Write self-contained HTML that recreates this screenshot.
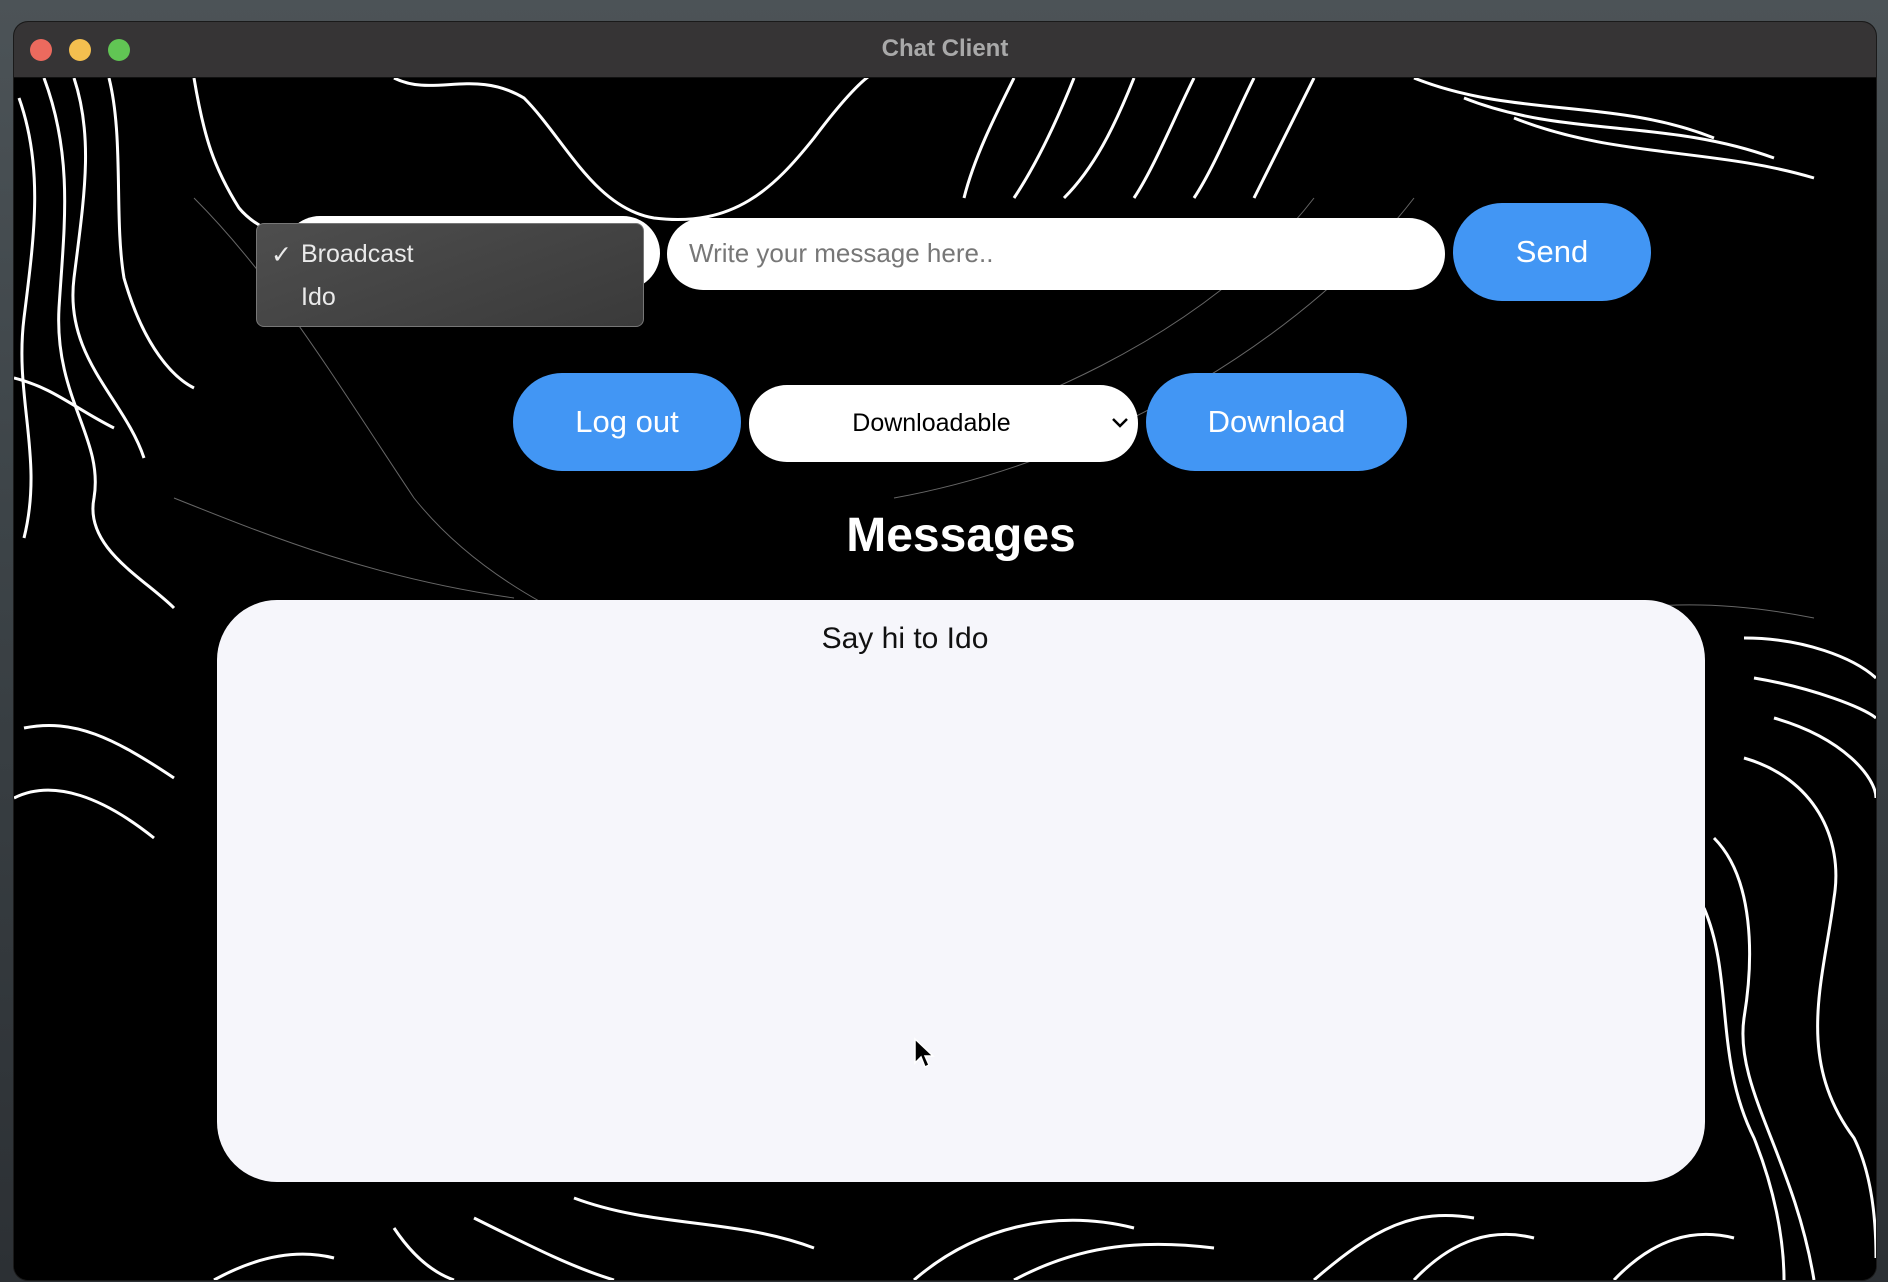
<!DOCTYPE html>
<html><head><meta charset="utf-8"><style>
html,body{margin:0;padding:0}
body{width:1888px;height:1282px;overflow:hidden;position:relative;background:linear-gradient(180deg,#4c5357 0%,#3d4448 40%,#2c3034 100%);font-family:"Liberation Sans",Arial,sans-serif}
.win{position:absolute;left:14px;top:22px;width:1862px;height:1258px;border-radius:14px;overflow:hidden;background:#000;box-shadow:0 0 0 1px #1a1a1a}
.tb{position:absolute;left:0;top:0;right:0;height:55px;background:#363435;border-bottom:1px solid #111}
.tb .t{position:absolute;left:0;right:0;top:13px;text-align:center;color:#a9a9a9;font-weight:bold;font-size:24px}
.dot{position:absolute;top:17px;width:22px;height:22px;border-radius:50%}
.c{position:absolute;left:0;top:56px;right:0;bottom:0;background:#000}
.abs{position:absolute}
.btn{position:absolute;background:#4296f4;color:#fff;border-radius:60px;text-align:center;font-size:31px}
</style></head><body>
<div class="win">
<div class="tb"><div class="dot" style="left:16px;background:#ec6a5e"></div><div class="dot" style="left:55px;background:#f4bf4f"></div><div class="dot" style="left:94px;background:#61c554"></div><div class="t">Chat Client</div></div>
<div class="c">
<svg class="abs" style="left:0;top:0" width="1862" height="1202" viewBox="0 0 1862 1202">
<g fill="none" stroke="#fff" stroke-width="3">
<path d="M5 20 C30 90 20 160 10 240 C0 320 30 380 10 460"/>
<path d="M30 0 C60 80 50 150 45 230 C40 320 90 360 80 420 C70 470 130 500 160 530"/>
<path d="M60 0 C80 60 70 120 60 200 C50 280 110 320 130 380"/>
<path d="M95 0 C110 60 100 140 110 200 C130 270 160 300 180 310"/>
<path d="M180 0 C190 60 200 90 225 130 C250 160 290 160 300 170"/>
<path d="M0 300 C40 310 60 330 100 350"/>
<path d="M10 650 C60 640 100 660 160 700"/>
<path d="M0 720 C40 700 90 720 140 760"/>
<path d="M380 0 C420 20 460 -10 510 20 C550 60 580 130 640 140 C720 150 760 110 800 60 C830 20 850 0 860 -5"/>
<path d="M1000 0 C980 40 960 80 950 120"/>
<path d="M1060 0 C1040 50 1020 90 1000 120"/>
<path d="M1120 0 C1100 50 1080 90 1050 120"/>
<path d="M1180 0 C1160 40 1140 90 1120 120"/>
<path d="M1240 0 C1220 40 1200 90 1180 120"/>
<path d="M1300 0 C1280 40 1260 80 1240 120"/>
<path d="M1400 0 C1500 40 1600 20 1700 60"/>
<path d="M1450 20 C1550 60 1650 40 1760 80"/>
<path d="M1500 40 C1600 80 1700 70 1800 100"/>
<path d="M1730 680 C1800 700 1830 760 1820 820 C1810 900 1780 980 1840 1060 C1860 1100 1862 1150 1862 1180"/>
<path d="M1760 640 C1830 660 1862 700 1862 720"/>
<path d="M1740 600 C1800 610 1850 630 1862 640"/>
<path d="M1700 760 C1740 800 1740 880 1730 940 C1720 1010 1780 1080 1800 1202"/>
<path d="M1690 830 C1720 900 1700 980 1740 1060 C1760 1110 1770 1160 1770 1202"/>
<path d="M1730 560 C1790 560 1840 580 1862 600"/>
<path d="M560 1120 C640 1150 720 1140 800 1170"/>
<path d="M460 1140 C520 1170 560 1190 600 1202"/>
<path d="M380 1150 C400 1180 420 1195 440 1202"/>
<path d="M900 1202 C960 1150 1040 1130 1120 1150"/>
<path d="M1000 1202 C1060 1170 1120 1160 1200 1170"/>
<path d="M1300 1202 C1360 1150 1400 1130 1460 1140"/>
<path d="M1400 1202 C1440 1160 1480 1150 1520 1160"/>
<path d="M1600 1202 C1640 1160 1680 1150 1720 1160"/>
<path d="M200 1202 C240 1180 280 1170 320 1180"/>
</g>
<g fill="none" stroke="#666" stroke-width="1">
<path d="M180 120 C260 200 320 300 400 420 C480 520 600 560 700 600"/>
<path d="M1300 120 C1200 250 1000 350 800 380"/>
<path d="M1400 120 C1300 250 1100 380 880 420"/>
<path d="M160 420 C260 460 360 500 500 520"/>
<path d="M1500 560 C1600 520 1700 520 1800 540"/>
</g>
</svg>
<div class="abs" style="left:269px;top:138px;width:377px;height:74px;border-radius:37px;background:#fff"></div>
<div class="abs" style="left:242px;top:145px;width:388px;height:104px;border-radius:8px;background:linear-gradient(160deg,#4e4e4e,#3a3a3a);border:1px solid #777;box-sizing:border-box;color:#eaeaea;font-size:25px">
<div class="abs" style="left:14px;top:16px">✓</div><div class="abs" style="left:44px;top:16px">Broadcast</div><div class="abs" style="left:44px;top:59px">Ido</div></div>
<div class="abs" style="left:653px;top:140px;width:778px;height:72px;border-radius:36px;background:#fff;box-sizing:border-box;padding:20px 22px;color:#777;font-size:26px">Write your message here..</div>
<div class="btn" style="left:1439px;top:125px;width:198px;height:98px;line-height:98px">Send</div>
<div class="btn" style="left:499px;top:295px;width:228px;height:98px;line-height:98px">Log out</div>
<div class="abs" style="left:735px;top:307px;width:389px;height:77px;border-radius:38px;background:#fff;line-height:77px;font-size:25px;color:#000"><span style="position:absolute;left:0;width:365px;text-align:center">Downloadable</span></div>
<svg class="abs" style="left:1097px;top:339px" width="18" height="12"><path d="M2 2 L9 9 L16 2" stroke="#000" stroke-width="2.5" fill="none"/></svg>
<div class="btn" style="left:1132px;top:295px;width:261px;height:98px;line-height:98px">Download</div>
<div class="abs" style="left:0;right:0;top:430px;text-align:center;color:#fff;font-weight:bold;font-size:48px;padding-left:32px">Messages</div>
<div class="abs" style="left:203px;top:522px;width:1488px;height:582px;border-radius:60px;background:#f6f6fb"></div>
<div class="abs" style="left:700px;top:544px;width:382px;text-align:center;font-size:30px;color:#111">Say hi to Ido</div>
<svg class="abs" style="left:899px;top:959px" width="24" height="34"><path d="M2 2 L2 26 L8 20 L12 30 L16 28 L12 19 L20 19 Z" fill="#000" stroke="#fff" stroke-width="1.5"/></svg>
</div></div>
</body></html>
